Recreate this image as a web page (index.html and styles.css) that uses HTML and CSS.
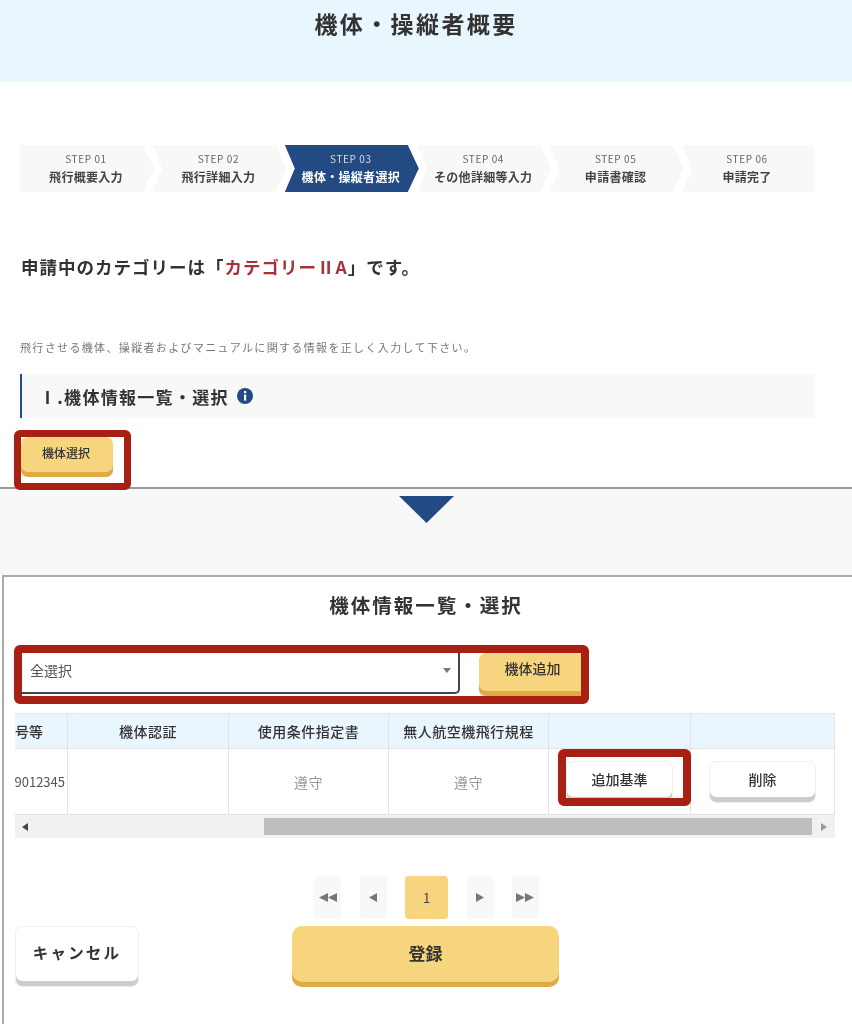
FILE: index.html
```html
<!DOCTYPE html>
<html lang="ja">
<head>
  <meta charset="UTF-8">
  <title>機体・操縦者概要</title>
  <link rel="stylesheet" href="styles.css">
</head>
<body>
  <header class="page-head">
    <h1>機体・操縦者概要</h1>
  </header>

  <section class="top">
    <ol class="steps">
      <li class="step"><small>STEP 01</small><b>飛行概要入力</b></li>
      <li class="step"><small>STEP 02</small><b>飛行詳細入力</b></li>
      <li class="step current"><small>STEP 03</small><b>機体・操縦者選択</b></li>
      <li class="step"><small>STEP 04</small><b>その他詳細等入力</b></li>
      <li class="step"><small>STEP 05</small><b>申請書確認</b></li>
      <li class="step"><small>STEP 06</small><b>申請完了</b></li>
    </ol>

    <p class="category">申請中のカテゴリーは「<em>カテゴリーⅡA</em>」です。</p>
    <p class="lead">飛行させる機体、操縦者およびマニュアルに関する情報を正しく入力して下さい。</p>

    <h2 class="section-title">
      Ⅰ.機体情報一覧・選択
      <svg class="info" width="16" height="16" viewBox="0 0 16 16">
        <circle cx="8" cy="8" r="8" fill="#234a82"/>
        <rect x="7" y="3" width="2.2" height="2.2" fill="#fff"/>
        <rect x="7" y="6.6" width="2.2" height="6" fill="#fff"/>
      </svg>
    </h2>

    <div class="marked mark-select">
      <button class="btn yellow small">機体選択</button>
    </div>
  </section>

  <div class="divider"><span class="down"></span></div>

  <section class="modal">
    <h2 class="modal-title">機体情報一覧・選択</h2>

    <div class="pick marked mark-pick">
      <div class="select">
        <span>全選択</span>
        <i class="caret"></i>
      </div>
      <button class="btn yellow add">機体追加</button>
    </div>

    <div class="table">
      <div class="cell th first-head">号等</div>
      <div class="cell th">機体認証</div>
      <div class="cell th">使用条件指定書</div>
      <div class="cell th">無人航空機飛行規程</div>
      <div class="cell th"></div>
      <div class="cell th"></div>

      <div class="cell td clip"><span>0123456789012345</span></div>
      <div class="cell td"></div>
      <div class="cell td muted">遵守</div>
      <div class="cell td muted">遵守</div>
      <div class="cell td action">
        <div class="marked mark-row"><button class="btn white row-btn">追加基準</button></div>
      </div>
      <div class="cell td action"><button class="btn white row-btn del">削除</button></div>
    </div>

    <div class="scrollbar">
      <svg width="6" height="8" viewBox="0 0 6 8"><path d="M6 0V8L0 4Z" fill="#444"/></svg>
      <div class="thumb"></div>
      <svg width="6" height="8" viewBox="0 0 6 8"><path d="M0 0V8L6 4Z" fill="#999"/></svg>
    </div>

    <nav class="pager">
      <a class="page first"><svg width="19" height="9" viewBox="0 0 19 9"><path d="M10 0V9L1 4.5ZM19 0V9L10 4.5Z" fill="#777"/></svg></a>
      <a class="page prev"><svg width="8" height="9" viewBox="0 0 8 9"><path d="M8 0V9L0 4.5Z" fill="#777"/></svg></a>
      <a class="page active">1</a>
      <a class="page next"><svg width="8" height="9" viewBox="0 0 8 9"><path d="M0 0V9L8 4.5Z" fill="#777"/></svg></a>
      <a class="page last"><svg width="19" height="9" viewBox="0 0 19 9"><path d="M0 0V9L9 4.5ZM9 0V9L18 4.5Z" fill="#777"/></svg></a>
    </nav>

    <div class="foot">
      <button class="btn white cancel">キャンセル</button>
      <button class="btn yellow submit">登録</button>
    </div>
  </section>
</body>
</html>
```

FILE: styles.css
```css
* {
  box-sizing: border-box;
}
html, body {
  margin: 0;
  height: 1024px;
  overflow: hidden;
  background: #fff;
  color: #333;
  font-family: "Noto Sans CJK JP", "Noto Sans", sans-serif;
}
body {
  filter: blur(.45px); /* the source is a soft, upscaled capture */
}
p, h1, h2, ol {
  margin: 0;
  padding: 0;
}

.page-head {
  height: 82px;
  background: #eaf6fd;
  text-align: center;
}
.page-head h1 {
  padding-right: 20px;
  font-size: 23px;
  font-weight: 700;
  line-height: 46px;
  letter-spacing: 2.4px;
}

/* top half */
.top {
  height: 405px;
  padding-top: 63px;
}
.steps {
  display: flex;
  height: 47px;
  margin-left: 20px;
  list-style: none;
}
.step {
  display: flex;
  flex-direction: column;
  align-items: center;
  justify-content: center;
  flex: none;
  width: 134px;
  margin-right: -1.6px;
  padding-right: 2px;
  background: #f8f8f8;
  color: #444;
  clip-path: polygon(0 0, calc(100% - 11px) 0, 100% 50%, calc(100% - 11px) 100%, 0 100%, 10px 50%);
}
.step:first-child {
  clip-path: polygon(0 0, calc(100% - 11px) 0, 100% 50%, calc(100% - 11px) 100%, 0 100%);
}
.step:last-child {
  width: 132px;
  clip-path: polygon(0 0, 100% 0, 100% 100%, 0 100%, 10px 50%);
}
.step small {
  font-size: 10px;
  line-height: 13px;
  color: #666;
  letter-spacing: .6px;
}
.step b {
  margin-top: 2px;
  font-size: 12px;
  line-height: 19px;
  font-weight: 700;
  letter-spacing: .3px;
  white-space: nowrap;
}
.step.current {
  background: #234a82;
  color: #fff;
}
.step.current small {
  color: #ddd;
}

.category {
  margin: 63px 0 0 21px;
  font-size: 17.5px;
  font-weight: 700;
  line-height: 24px;
  letter-spacing: 1px;
}
.category em {
  font-style: normal;
  color: #a8323a;
}
.lead {
  margin: 60px 0 0 20px;
  font-size: 11px;
  line-height: 16px;
  letter-spacing: 1.35px;
  color: #777;
}
.section-title {
  display: flex;
  align-items: center;
  gap: 8px;
  width: 794px;
  height: 44px;
  margin: 19px 0 0 20px;
  padding-left: 17px;
  background: #f8f8f8;
  border-left: 2px solid #234a82;
  font-size: 17px;
  font-weight: 700;
  letter-spacing: 1.3px;
}

/* buttons */
.btn {
  display: block;
  border: 0;
  border-radius: 7px;
  font-family: inherit;
  font-weight: 500;
  color: #333;
}
.yellow {
  background: #f7d57e;
  box-shadow: inset 0 -5px 0 #e0ab45;
}
.white {
  background: #fff;
  border: 1px solid #eee;
  box-shadow: inset 0 -5px 0 #ccc;
}
.small {
  width: 92px;
  height: 40px;
  padding: 0 2px 10px 0;
  font-size: 12px;
}

/* the red frames that lie over the controls */
.marked {
  position: relative;
}
.marked::after {
  content: "";
  position: absolute;
  z-index: 2;
  border: 8px solid #a81f14;
  border-radius: 6px;
}
.mark-select {
  width: 92px;
  margin: 19px 0 0 21px;
}
.mark-select::after {
  inset: -7px -18px -13px -7px;
  border-width: 7px;
}
.mark-pick::after {
  inset: -8px -8px -8px -7px;
}
.mark-row::after {
  inset: -12px -18px -3px -8px;
}

.divider {
  height: 88px;
  background: #f8f8f8;
  border-top: 2px solid #999;
}
.down {
  display: block;
  width: 55px;
  height: 27px;
  margin: 7px 0 0 399px;
  background: #234a82;
  clip-path: polygon(0 0, 100% 0, 50% 100%);
}

/* modal */
.modal {
  height: 449px;
  margin-left: 2px;
  border-top: 2px solid #aaa;
  border-left: 2px solid #aaa;
}
.modal-title {
  margin-top: 13px;
  padding-right: 4px;
  text-align: center;
  font-size: 19.5px;
  font-weight: 700;
  line-height: 30px;
  letter-spacing: 2px;
}
.pick {
  display: flex;
  align-items: flex-start;
  width: 560px;
  height: 43px;
  margin: 33px 0 0 17px;
}
.select {
  display: flex;
  align-items: center;
  justify-content: space-between;
  width: 439px;
  height: 41px;
  padding: 0 7px 5px 9px;
  border-right: 2px solid #444;
  border-bottom: 2px solid #444;
  border-bottom-right-radius: 5px;
  font-size: 14px;
  color: #555;
}
.caret {
  width: 0;
  height: 0;
  border-left: 4px solid transparent;
  border-right: 4px solid transparent;
  border-top: 5px solid #777;
}
.add {
  width: 102px;
  height: 43px;
  margin-left: 19px;
  padding: 0 0 13px 5px;
  border-radius: 7px 0 0 7px;
  font-size: 14px;
}

.table {
  display: grid;
  grid-template-columns: 53px 161px 160px 160px 142px 144px;
  grid-template-rows: 36px 66px;
  width: 820px;
  margin: 17px 0 0 11px;
}
.cell {
  display: flex;
  align-items: center;
  justify-content: center;
  border-right: 1px solid #e3e3e3;
  border-bottom: 1px solid #e3e3e3;
  font-size: 14px;
  font-weight: 500;
  letter-spacing: .5px;
}
.th {
  background: #eaf6fd;
  border-top: 1px solid #e3e3e3;
}
.first-head {
  justify-content: flex-start;
  letter-spacing: 0;
}
.clip {
  justify-content: flex-end;
  overflow: hidden;
  padding-right: 2px;
  color: #555;
  font-size: 13px;
  font-weight: 400;
  letter-spacing: 0;
}
.clip span {
  flex: none;
}
.muted {
  color: #999;
  font-weight: 400;
}
.action {
  align-items: flex-start;
  padding-top: 12px;
}
.row-btn {
  width: 107px;
  height: 42px;
  padding-bottom: 7px;
  font-size: 14px;
  letter-spacing: 0;
}

.scrollbar {
  display: flex;
  align-items: center;
  width: 820px;
  height: 23px;
  margin-left: 11px;
  padding: 0 7px;
  background: #f1f1f1;
}
.thumb {
  width: 548px;
  height: 17px;
  margin: 0 9px 0 236px;
  background: #bebebe;
}

.pager {
  display: flex;
  height: 43px;
  margin: 38px 0 0 310px;
}
.page {
  display: flex;
  align-items: center;
  justify-content: center;
  width: 27px;
  margin-right: 18.5px;
  background: #f8f8f8;
  border-radius: 4px;
  font-size: 13px;
  color: #444;
}
.page.active {
  width: 43px;
  background: #f7d57e;
}

.foot {
  display: flex;
  margin: 7px 0 0 11px;
}
.cancel {
  width: 124px;
  height: 61px;
  padding-bottom: 10px;
  font-size: 15.5px;
  font-weight: 700;
  letter-spacing: 2.2px;
}
.submit {
  width: 267px;
  height: 61px;
  margin-left: 153px;
  padding-bottom: 10px;
  border-radius: 10px;
  font-size: 17px;
  font-weight: 700;
}
```
